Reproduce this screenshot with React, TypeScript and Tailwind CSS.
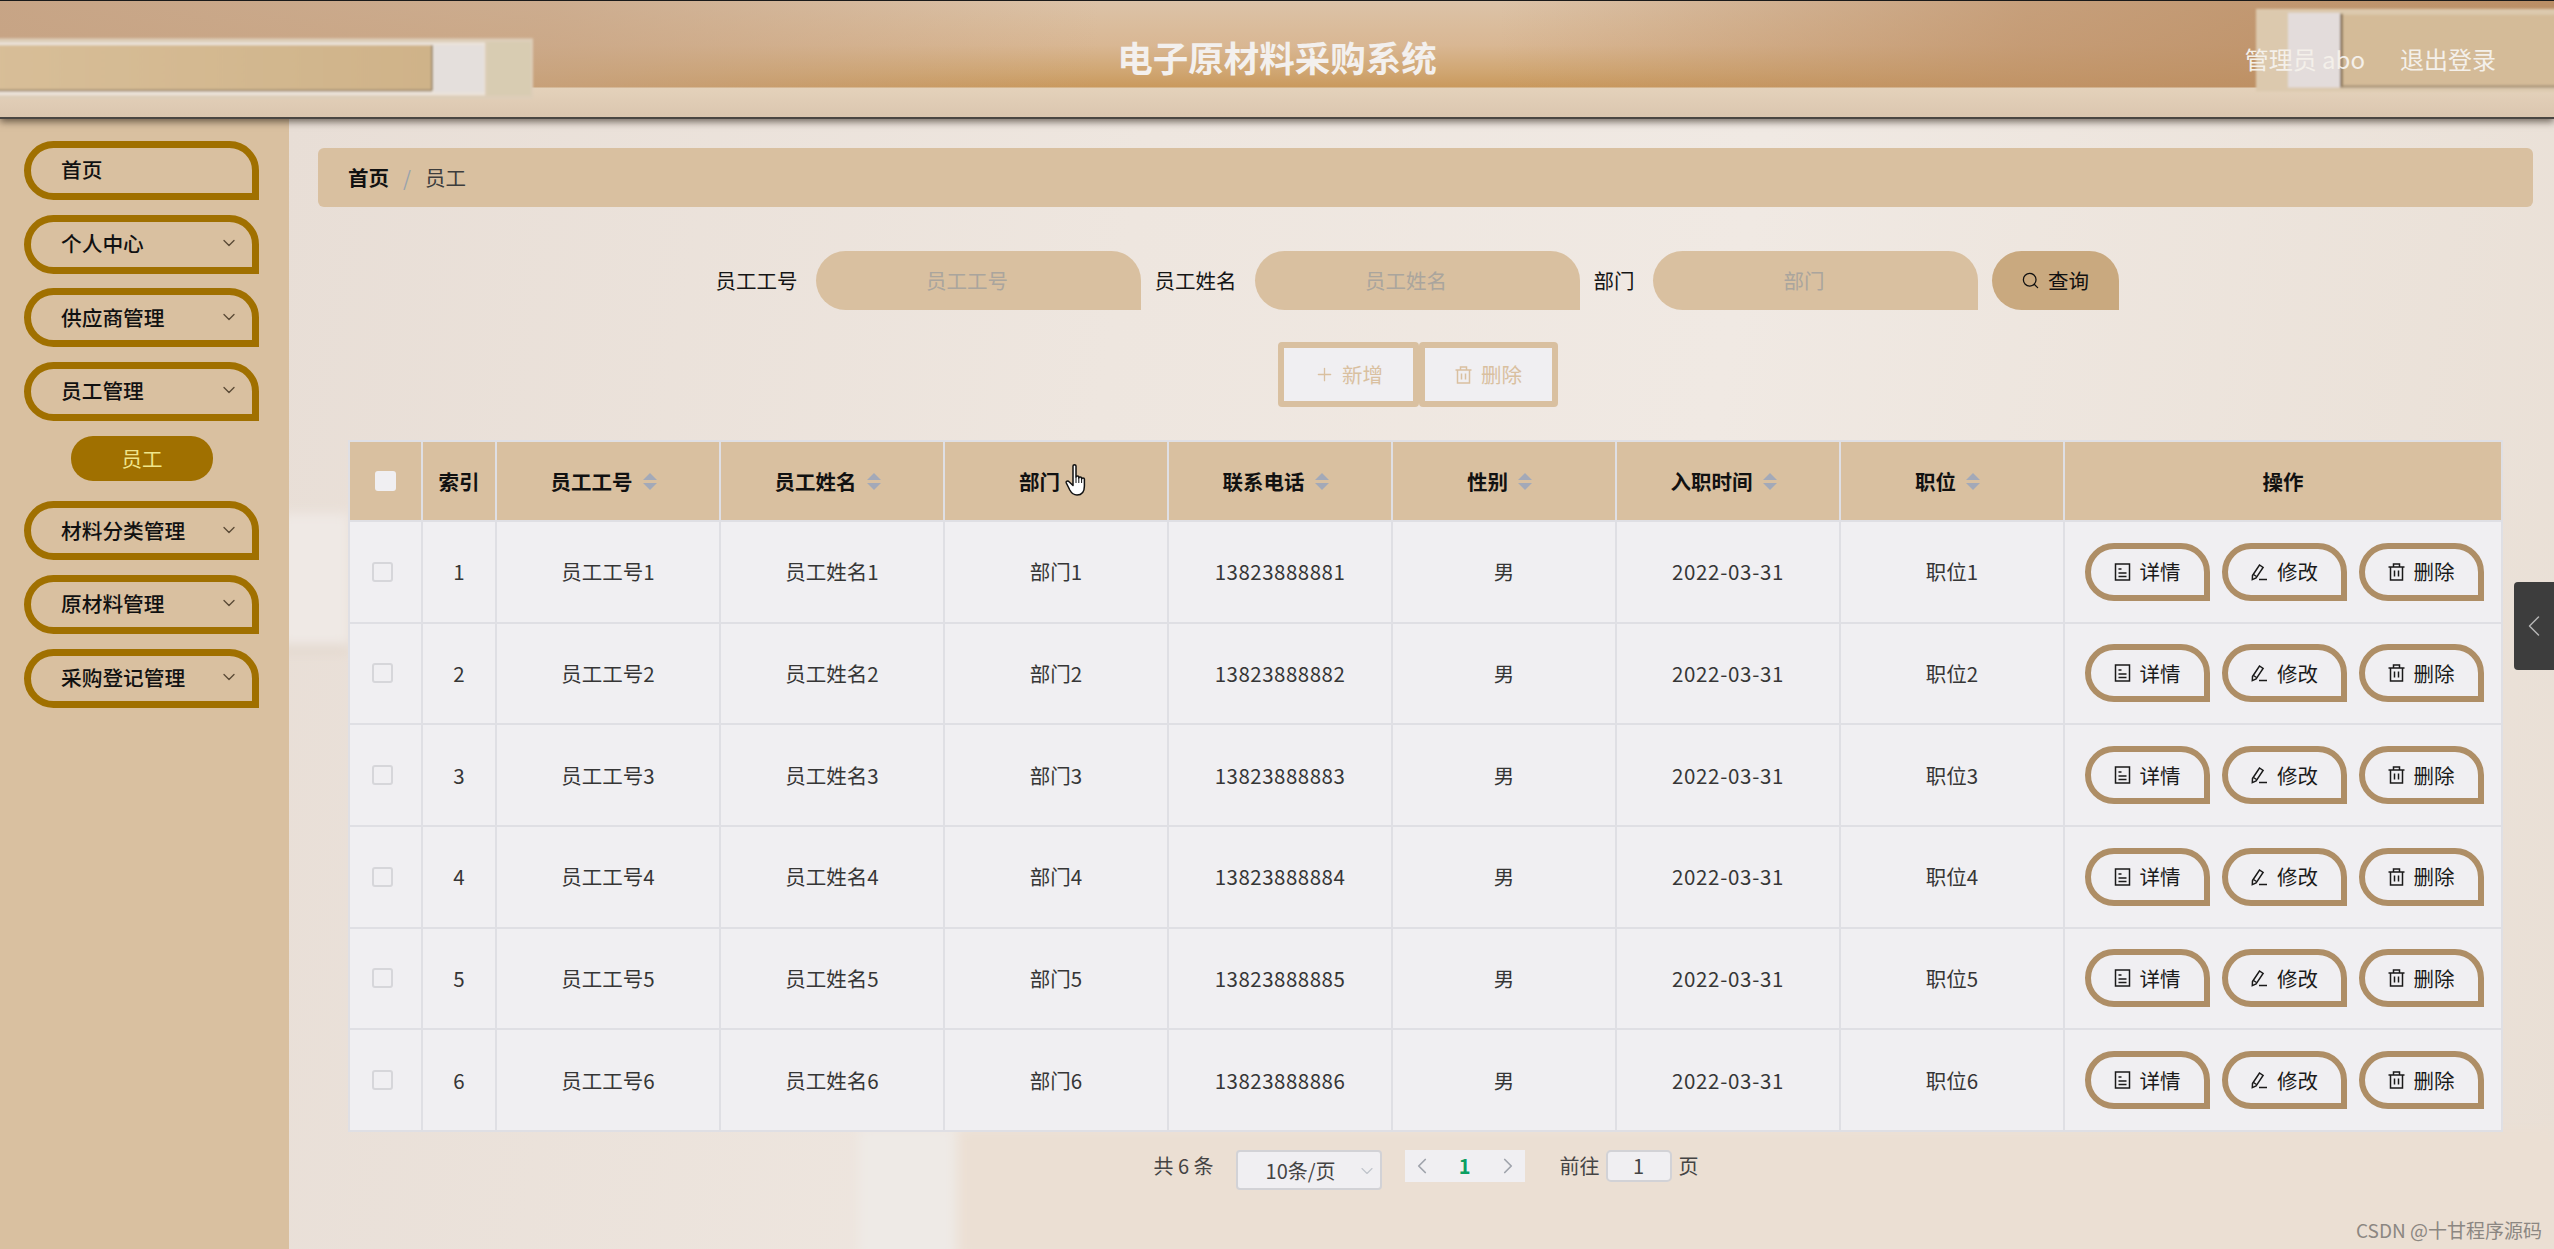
import React from 'react';
import { ChevronDown, ChevronLeft, ChevronRight, Plus, Search } from 'lucide-react';

const menus = [
  { label: '首页', arrow: false },
  { label: '个人中心', arrow: true },
  { label: '供应商管理', arrow: true },
  { label: '员工管理', arrow: true, sub: '员工' },
  { label: '材料分类管理', arrow: true },
  { label: '原材料管理', arrow: true },
  { label: '采购登记管理', arrow: true },
];

const columns = [
  { title: '员工工号', sort: true },
  { title: '员工姓名', sort: true },
  { title: '部门', sort: false },
  { title: '联系电话', sort: true },
  { title: '性别', sort: true },
  { title: '入职时间', sort: true },
  { title: '职位', sort: true },
];

const rows = [1, 2, 3, 4, 5, 6];

function TicketIcon() {
  return (
    <svg width="17" height="18" viewBox="0 0 17 18" fill="none" stroke="currentColor" strokeWidth="1.5">
      <rect x="1.5" y="1" width="14" height="16" />
      <path d="M4.5 6h3M4.5 10h8M4.5 13.5h8" />
    </svg>
  );
}

function EditIcon() {
  return (
    <svg width="18" height="18" viewBox="0 0 18 18" fill="none" stroke="currentColor" strokeWidth="1.5">
      <path d="M2.500 12.500 9.500 2l3.600 2.400-7 10.600-3.800 1.600z" />
      <path d="M3.500 11.500l3 2M9 16.500h8" />
    </svg>
  );
}

function TrashIcon() {
  return (
    <svg width="17" height="18" viewBox="0 0 17 18" fill="none" stroke="currentColor" strokeWidth="1.5">
      <path d="M0.500 4h16M5.500 4V1h6v3M2.500 4v13h12V4M6.500 7.500v6M10.500 7.500v6" />
    </svg>
  );
}

function SortCaret() {
  return (
    <span className="flex flex-col gap-[3px] ml-[10px]">
      <span className="w-0 h-0 border-x-[7px] border-x-transparent border-b-[7px] border-b-[#a3a9b8]" />
      <span className="w-0 h-0 border-x-[7px] border-x-transparent border-t-[7px] border-t-[#a3a9b8]" />
    </span>
  );
}

function HandCursor() {
  return (
    <svg className="absolute left-[120px] top-[21px]" width="25" height="34" viewBox="0 0 25 34" fill="#fff" stroke="#111" strokeWidth="1.500" strokeLinejoin="round">
      <path d="M8 3c0-1.600 3-1.600 3 0v11c0-1.400 2.800-1.400 2.800 0v1c0-1.400 2.800-1.400 2.800 0v1c0-1.400 2.800-1.400 2.800 0v7c0 5-1.400 9-7.400 9-4 0-5.600-2-7.200-5L1.300 20c-.8-1.700 1.500-2.700 2.800-1.200L8 22.500z" />
      <path d="M11 14v6M13.800 15v5M16.600 16v4" strokeWidth="1" />
    </svg>
  );
}

function RowButton({ icon, label }: { icon: React.ReactNode; label: string }) {
  return (
    <button className="flex items-center justify-center gap-[9px] w-[125px] h-[58px] border-[6px] border-[#ae8e66] rounded-[30px] rounded-br-none text-[#1a1a1a] text-[20.5px]">
      {icon}
      {label}
    </button>
  );
}

function SearchField({ label, labelClass }: { label: string; labelClass: string }) {
  return (
    <>
      <span className={`text-[20.5px] text-[#151515] ${labelClass}`}>{label}</span>
      <div className="w-[325px] h-[59px] bg-[#d9c0a0] rounded-[30px] rounded-br-none flex items-center justify-center pr-[22px] text-[20.5px] text-[#aaa59d]">
        {label}
      </div>
    </>
  );
}

function HeaderBackdrop() {
  return (
    <svg className="absolute inset-0 w-full h-full" viewBox="0 0 2554 118" preserveAspectRatio="none">
      <defs>
        <linearGradient id="wood" x1="0" x2="0" y1="0" y2="1">
          <stop offset="0" stopColor="#dcc3a8" />
          <stop offset="0.5" stopColor="#d9b793" />
          <stop offset="0.8" stopColor="#d0a672" />
          <stop offset="1" stopColor="#c8975a" />
        </linearGradient>
        <linearGradient id="sideL" x1="0" x2="1" y1="0" y2="0">
          <stop offset="0" stopColor="#c6a384" stopOpacity="0.95" />
          <stop offset="0.5" stopColor="#c6a384" stopOpacity="0.7" />
          <stop offset="1" stopColor="#c6a384" stopOpacity="0" />
        </linearGradient>
        <linearGradient id="sideR" x1="1" x2="0" y1="0" y2="0">
          <stop offset="0" stopColor="#b98c62" stopOpacity="0.95" />
          <stop offset="0.5" stopColor="#bd9068" stopOpacity="0.7" />
          <stop offset="1" stopColor="#bd9068" stopOpacity="0" />
        </linearGradient>
        <linearGradient id="ledge" x1="0" x2="0" y1="0" y2="1">
          <stop offset="0" stopColor="#e4d2bb" />
          <stop offset="1" stopColor="#dbc6af" />
        </linearGradient>
        <linearGradient id="panelL" x1="0" x2="1" y1="0" y2="0">
          <stop offset="0" stopColor="#d8be98" />
          <stop offset="1" stopColor="#cfb389" />
        </linearGradient>
        <filter id="soft">
          <feGaussianBlur stdDeviation="1" />
        </filter>
      </defs>
      <rect width="2554" height="90" fill="url(#wood)" />
      <rect width="1100" height="90" fill="url(#sideL)" />
      <rect x="1500" width="1054" height="90" fill="url(#sideR)" />
      <rect y="88" width="2554" height="30" fill="url(#ledge)" />
      <g filter="url(#soft)">
        <rect x="-5" y="38" width="538" height="62" fill="#ddcdb8" />
        <rect x="-5" y="42" width="490" height="54" fill="#ebe3da" />
        <rect x="-5" y="45" width="437" height="46" fill="url(#panelL)" />
        <rect x="-5" y="90" width="437" height="2" fill="#a08c70" />
        <rect x="431" y="45" width="2" height="46" fill="#9d8a70" />
        <rect x="434" y="45" width="50" height="48" fill="#e4dfdc" />
        <rect x="487" y="42" width="44" height="54" fill="#d8ccb2" />
        <rect x="2256" y="8" width="310" height="84" fill="#dcc9ae" />
        <rect x="2288" y="12" width="52" height="76" fill="#e3dcdb" />
        <rect x="2342" y="14" width="220" height="73" fill="#d4bb98" />
        <rect x="2340" y="13" width="3" height="75" fill="#8f7a5e" />
        <rect x="2342" y="86" width="220" height="2" fill="#a08c70" />
      </g>
    </svg>
  );
}

function MainBackdrop() {
  return (
    <svg className="absolute inset-0 w-full h-full" viewBox="0 0 2265 1131" preserveAspectRatio="none">
      <defs>
        <filter id="stripe">
          <feGaussianBlur stdDeviation="6" />
        </filter>
      </defs>
      <g filter="url(#stripe)">
        <rect x="-10" y="395" width="70" height="135" fill="#efe9e5" />
        <rect x="-10" y="528" width="70" height="4" fill="#d9c9b9" />
        <rect x="670" y="1010" width="1595" height="130" fill="#ebdfd3" />
        <rect x="570" y="1010" width="95" height="130" fill="#eeeae6" />
      </g>
    </svg>
  );
}

export default function App() {
  return (
    <div className="relative w-[2554px] h-[1249px] overflow-hidden flex flex-col font-['Noto_Sans_CJK_SC','Noto_Sans',sans-serif] bg-[#e9dfd5]">
      <header className="relative z-10 h-[119px] shrink-0 border-t border-t-[#1a1a1a] border-b-2 border-b-[#4a4642] shadow-[0_3px_7px_rgba(40,30,20,0.6)] flex items-center justify-center">
        <HeaderBackdrop />
        <h1 className="relative -top-[2px] text-[35.500px] font-bold leading-none text-[#f3f0ee]">电子原材料采购系统</h1>
        <div className="absolute right-[58px] top-[46px] flex gap-[35px] text-[24px] leading-none text-[#f4f0ea]">
          <span>管理员 abo</span>
          <span>退出登录</span>
        </div>
      </header>

      <div className="flex flex-1 min-h-0">
        <aside className="w-[289px] shrink-0 bg-[#d9c0a0] pt-[22px] pl-[24px] flex flex-col gap-[14.600px]">
          {menus.map((menu) => (
            <div key={menu.label} className="flex flex-col">
              <div className="w-[235px] h-[59px] border-[7px] border-[#a07000] rounded-[30px] rounded-br-none flex items-center justify-between pl-[30px] pr-[13px] text-[20.700px] font-medium text-[#111]">
                <span className="-mt-[1px]">{menu.label}</span>
                {menu.arrow && <ChevronDown size={20} strokeWidth={1.600} className="text-[#5b4a36] -mt-[2px]" />}
              </div>
              {menu.sub && (
                <div className="mt-[15px] mb-[6px] ml-[47px] w-[142px] h-[45px] rounded-[22px] bg-[#a07000] flex items-center justify-center text-[20.500px] text-[#f0e68c]">
                  {menu.sub}
                </div>
              )}
            </div>
          ))}
        </aside>

        <main className="relative flex-1 bg-[linear-gradient(100deg,#e8ded6_0%,#eee6df_35%,#f0e9e3_60%,#e9dfd5_100%)]">
          <MainBackdrop />
          <div className="relative pt-[29px] pl-[29px] pr-[21px] flex flex-col">
            <div className="h-[59px] bg-[#d9c0a0] rounded-[6px] flex items-center pl-[30px] text-[20.500px]">
              <span className="font-bold text-[#111]">首页</span>
              <span className="mx-[14px] text-[#9aa3ad]">/</span>
              <span className="text-[#3d3d3d]">员工</span>
            </div>

            <div className="mt-[44px] pr-[17px] flex items-center justify-center">
              <SearchField label="员工工号" labelClass="mr-[18px]" />
              <div className="w-[14px]" />
              <SearchField label="员工姓名" labelClass="mr-[18px]" />
              <div className="w-[14px]" />
              <SearchField label="部门" labelClass="mr-[18px]" />
              <button className="ml-[14px] w-[127px] h-[59px] rounded-[30px] rounded-br-none bg-[#c9a97f] flex items-center justify-center gap-[8px] text-[20.500px] text-[#111]">
                <Search size={19} strokeWidth={1.600} />
                查询
              </button>
            </div>

            <div className="mt-[32px] pr-[15px] flex justify-center">
              <button className="w-[141px] h-[65px] border-[6px] border-[#d9c0a0] rounded-[4px] bg-[#f0eff2] flex items-center justify-center gap-[7px] text-[20.500px] text-[#d9c0a0]">
                <Plus size={21} strokeWidth={1.500} />
                新增
              </button>
              <button className="w-[139px] h-[65px] border-[6px] border-[#d9c0a0] rounded-[4px] bg-[#f0eff2] flex items-center justify-center gap-[9px] text-[20.500px] text-[#d9c0a0]">
                <TrashIcon />
                删除
              </button>
            </div>

            <table className="mt-[33px] ml-[30px] w-[2155px] table-fixed border-collapse text-[20.500px]">
              <colgroup>
                <col className="w-[73px]" />
                <col className="w-[74px]" />
                {columns.map((c) => (
                  <col key={c.title} className="w-[224px]" />
                ))}
                <col />
              </colgroup>
              <thead>
                <tr className="h-[80px] bg-[#d9c0a0]">
                  <th className="border-2 border-[#dfdfe4]">
                    <span className="block ml-[25px] w-[21px] h-[20px] rounded-[3px] bg-[#f0eff2]" />
                  </th>
                  <th className="border-2 border-[#dfdfe4] font-bold text-[#111]">索引</th>
                  {columns.map((c) => (
                    <th key={c.title} className="relative border-2 border-[#dfdfe4] font-bold text-[#111]">
                      <span className="flex items-center justify-center pr-[9px]">
                        {c.title}
                        {c.sort ? <SortCaret /> : <span className="w-[24px]" />}
                      </span>
                      {!c.sort && <HandCursor />}
                    </th>
                  ))}
                  <th className="border-2 border-[#dfdfe4] font-bold text-[#111]">操作</th>
                </tr>
              </thead>
              <tbody>
                {rows.map((n) => (
                  <tr key={n} className="h-[101.670px] bg-[#f0eff2] text-[#363636] text-center">
                    <td className="border-2 border-[#dfdfe4]">
                      <span className="block ml-[22px] w-[21px] h-[20px] rounded-[3px] border-2 border-[#d6d6da]" />
                    </td>
                    <td className="border-2 border-[#dfdfe4]">{n}</td>
                    <td className="border-2 border-[#dfdfe4]">员工工号{n}</td>
                    <td className="border-2 border-[#dfdfe4]">员工姓名{n}</td>
                    <td className="border-2 border-[#dfdfe4]">部门{n}</td>
                    <td className="border-2 border-[#dfdfe4] tracking-[0.5px]">1382388888{n}</td>
                    <td className="border-2 border-[#dfdfe4]">男</td>
                    <td className="border-2 border-[#dfdfe4] tracking-[0.7px]">2022-03-31</td>
                    <td className="border-2 border-[#dfdfe4]">职位{n}</td>
                    <td className="border-2 border-[#dfdfe4]">
                      <div className="flex justify-center gap-[12px] pl-[2px]">
                        <RowButton icon={<TicketIcon />} label="详情" />
                        <RowButton icon={<EditIcon />} label="修改" />
                        <RowButton icon={<TrashIcon />} label="删除" />
                      </div>
                    </td>
                  </tr>
                ))}
              </tbody>
            </table>

            <div className="mt-[18px] pl-[1px] flex items-start justify-center text-[20px] leading-none text-[#444]">
              <span className="mt-[6px]">共 6 条</span>
              <div className="ml-[22px] w-[146px] h-[40px] rounded-[4px] border-2 border-[#d2d2d6] bg-[#f0eff2] flex items-center justify-between pl-[28px] pr-[3px] pt-[2px] text-[#444]">
                10条/页
                <ChevronDown size={20} strokeWidth={1.400} className="text-[#c0c4cc]" />
              </div>
              <div className="ml-[23px] w-[120px] h-[32px] bg-[#f0eff2] flex items-center justify-between px-[4px]">
                <ChevronLeft size={26} strokeWidth={1.600} className="text-[#a0a4ac]" />
                <span className="font-bold text-[#0b9f62]">1</span>
                <ChevronRight size={26} strokeWidth={1.600} className="text-[#a0a4ac]" />
              </div>
              <span className="ml-[35px] mt-[6px]">前往</span>
              <div className="ml-[6px] w-[66px] h-[32px] rounded-[5px] border-2 border-[#d2d2d6] bg-[#f0eff2] flex items-center justify-center">1</div>
              <span className="ml-[7px] mt-[6px]">页</span>
            </div>
          </div>
        </main>
      </div>

      <div className="absolute left-[2514px] top-[582px] w-[40px] h-[88px] rounded-l-[4px] bg-[#3d3d3d] flex items-center justify-center text-[#b4b4b4] z-20">
        <ChevronLeft size={36} strokeWidth={1} />
      </div>
      <span className="absolute right-[12px] top-[1220px] text-[19px] leading-none text-[#8c8782] z-20">CSDN @十甘程序源码</span>
    </div>
  );
}
